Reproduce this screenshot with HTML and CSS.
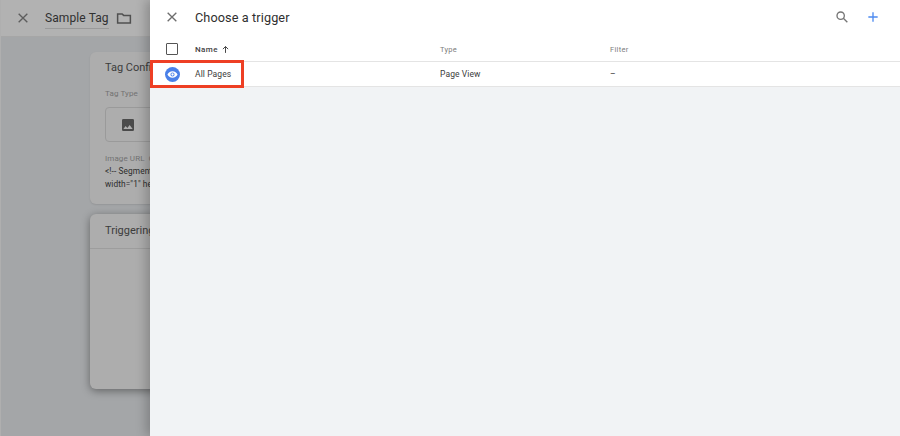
FILE: index.html
```html
<!DOCTYPE html>
<html lang="en">
<head>
<meta charset="utf-8">
<title>Choose a trigger</title>
<link rel="stylesheet" href="styles.css">
</head>
<body>
<div class="app">
  <section class="editor">
    <header class="editor-bar">
      <svg class="ico-close" viewBox="0 0 24 24"><path d="M5.500 5.500l13 13M18.500 5.500l-13 13"/></svg>
      <span class="tag-name">Sample Tag</span>
      <svg class="ico-folder" viewBox="0 0 24 24"><path d="M3.500 6.500h6l2 2h9v10h-17z"/></svg>
    </header>
    <div class="editor-body">
      <div class="card card-config">
        <h2 class="card-title">Tag Configuration</h2>
        <div class="field-label">Tag Type</div>
        <div class="type-box">
          <svg class="ico-image" viewBox="0 0 24 24"><path d="M21 19V5a2 2 0 0 0-2-2H5a2 2 0 0 0-2 2v14a2 2 0 0 0 2 2h14a2 2 0 0 0 2-2zM8.500 13.500l2.500 3 3.500-4.500 4.500 6H5z"/></svg>
        </div>
        <div class="field-label label-url">Image URL&nbsp;&nbsp;Custom</div>
        <div class="code">&lt;!-- Segment Pixel --&gt;</div>
        <div class="code">width="1" height="1"</div>
      </div>
      <div class="card card-trigger">
        <h2 class="card-title title-trigger">Triggering</h2>
      </div>
    </div>
  </section>

  <section class="panel">
    <header class="panel-bar">
      <svg class="ico-close panel-close" viewBox="0 0 24 24"><path d="M5.500 5.500l13 13M18.500 5.500l-13 13"/></svg>
      <h1 class="panel-title">Choose a trigger</h1>
      <svg class="ico-search" viewBox="0 0 24 24"><circle cx="10" cy="10" r="5.500"/><path d="M14 14l6 6"/></svg>
      <svg class="ico-plus" viewBox="0 0 24 24"><path d="M12 5v14M5 12h14"/></svg>
    </header>
    <div class="table-row table-head">
      <div class="cell-check"><span class="checkbox"></span></div>
      <div class="cell-name head-name">Name
        <svg class="ico-arrow" viewBox="0 0 12 12"><path d="M6 10.500V2M2.500 5.500L6 2l3.500 3.500"/></svg>
      </div>
      <div class="cell-type">Type</div>
      <div class="cell-filter">Filter</div>
    </div>
    <div class="table-row table-item">
      <div class="cell-check">
        <span class="badge">
          <svg class="ico-eye" viewBox="0 0 24 24"><path fill-rule="evenodd" d="M12 5C7 5 2.700 8.100 1 12c1.700 3.900 6 7 11 7s9.300-3.100 11-7c-1.700-3.900-6-7-11-7zm0 11.500a4.500 4.500 0 1 1 0-9 4.500 4.500 0 0 1 0 9zm0-7a2.500 2.500 0 1 0 0 5 2.500 2.500 0 0 0 0-5z"/></svg>
        </span>
      </div>
      <div class="cell-name">All Pages</div>
      <div class="cell-type cell-value">Page View</div>
      <div class="cell-filter cell-value">–</div>
    </div>
    <div class="highlight"></div>
  </section>
</div>
</body>
</html>
```
FILE: styles.css
```css
* { box-sizing: border-box; }
html, body { margin: 0; height: 100%; }
body { font-family: Roboto, "Liberation Sans", sans-serif; overflow: hidden; }

.app { position: relative; width: 900px; height: 436px; background: #a4a6a8; overflow: hidden; }

.editor { width: 150px; height: 100%; overflow: hidden; border-left: 1px solid #afafaf; }
.editor-bar {
  height: 37px; width: 899px; background: #b2b2b2; border-bottom: 1px solid #a6a6a6;
  display: flex; align-items: center; padding-left: 14px;
}
.ico-close { width: 16px; height: 16px; fill: none; stroke: #5d5d5d; stroke-width: 2; flex: none; }
.tag-name {
  margin-left: 14px; font-size: 12px; line-height: 20px; letter-spacing: .1px; color: #303030;
  border-bottom: 1px solid #9a9a9a; width: 64px; white-space: nowrap;
}
.ico-folder { width: 18px; height: 18px; margin-left: 6px; fill: none; stroke: #505050; stroke-width: 2; flex: none; }

.editor-body { padding: 15px 0 0 89px; width: 899px; display: flex; flex-direction: column; gap: 10px; }
.card { width: 500px; background: #adadad; border-radius: 6px; }
.card-config { height: 152px; padding: 7px 15px; box-shadow: 0 1px 2px rgba(0,0,0,.1); }
.card-trigger { height: 175px; box-shadow: 0 2px 8px rgba(0,0,0,.4); }
.card-title { margin: 0; font-size: 11px; font-weight: 400; line-height: 18px; color: #3c3c3c; white-space: nowrap; }
.title-trigger { padding: 8px 15px 9px; height: 35px; border-bottom: 1px solid #9d9d9d; }
.field-label { margin-top: 11px; font-size: 8px; line-height: 12px; color: #727272; letter-spacing: .1px; white-space: nowrap; }
.type-box {
  margin-top: 7px; width: 200px; height: 35px; border: 1px solid #9a9a9a; border-radius: 4px;
  display: flex; align-items: center; padding-left: 14px;
}
.ico-image { width: 16px; height: 16px; fill: #4a4a4a; }
.code { font-size: 8.300px; line-height: 13px; color: #2c2c2c; letter-spacing: .1px; white-space: nowrap; }

.panel {
  position: absolute; left: 150px; top: 0; width: 750px; height: 436px;
  background: #f1f3f5; box-shadow: -4px 0 10px rgba(0,0,0,.22);
}
.panel-bar { height: 35px; padding-bottom: 1px; background: #fff; display: flex; align-items: center; }
.panel-close { margin-left: 14px; stroke: #6d6d6d; }
.panel-title { margin: 0 0 0 15px; flex: 1; font-size: 12.700px; font-weight: 400; letter-spacing: .1px; color: #2f2f2f; }
.ico-search { width: 16px; height: 16px; fill: none; stroke: #757575; stroke-width: 2; flex: none; }
.ico-plus { width: 16px; height: 16px; margin: 0 19.500px 0 14.500px; fill: none; stroke: #4d8af0; stroke-width: 2; flex: none; }

.table-row { display: flex; align-items: center; background: #fff; border-bottom: 1px solid #e4e4e4; }
.table-head { height: 27px; padding-top: 2px; font-size: 7.500px; color: #7d7d7d; letter-spacing: .3px; }
.table-item { height: 25px; font-size: 8.500px; color: #3c3c3c; letter-spacing: .1px; }
.cell-check { width: 45px; display: flex; justify-content: center; flex: none; padding-right: 1px; }
.cell-name { width: 245px; flex: none; }
.head-name { font-size: 8px; font-weight: 500; color: #3f3f3f; letter-spacing: .4px; display: flex; align-items: center; gap: 3px; }
.cell-type { width: 170px; flex: none; }
.cell-filter { flex: 1; }
.checkbox { width: 12px; height: 12px; border: 1px solid #555; border-radius: 1px; }
.ico-arrow { width: 9px; height: 9px; fill: none; stroke: #444; stroke-width: 1.300; }
.badge { width: 15px; height: 15px; border-radius: 50%; background: #4a80e8; display: flex; align-items: center; justify-content: center; }
.ico-eye { width: 11px; height: 11px; fill: #fff; }

.highlight {
  position: absolute; left: 0; top: 60px; width: 94px; height: 28px;
  border: 3px solid #ee3f24; pointer-events: none;
}
```
